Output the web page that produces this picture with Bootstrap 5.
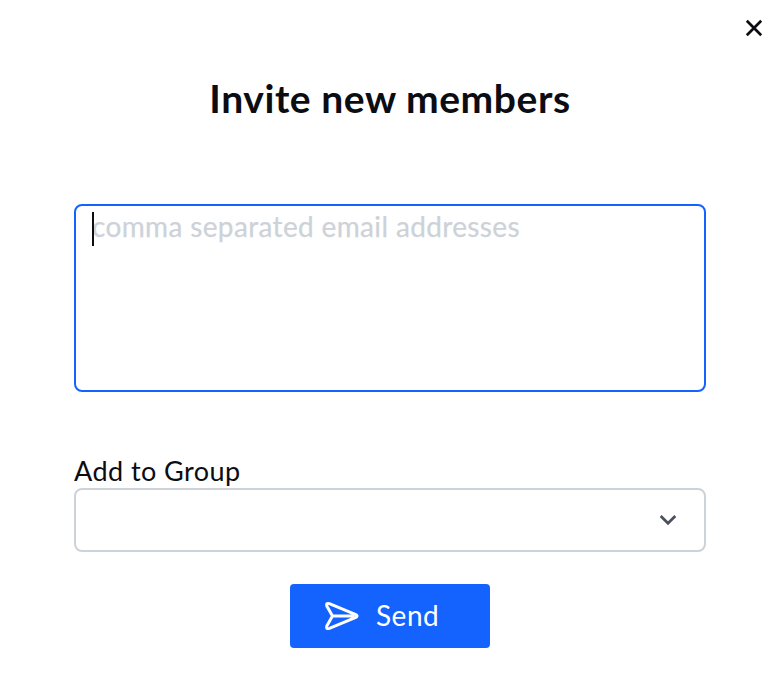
<!DOCTYPE html>
<html lang="en">
<head>
<meta charset="utf-8">
<meta name="viewport" content="width=device-width, initial-scale=1">
<title>Invite new members</title>
<link href="https://cdn.jsdelivr.net/npm/bootstrap@5.3.0/dist/css/bootstrap.min.css" rel="stylesheet">
<style>
body{font-family:Lato,"Liberation Sans",sans-serif;font-size:27px;line-height:36px;color:#0b0d12;background:#fff}
.invite-dialog{width:782px;height:682px}
.close-btn{width:20px;height:20px;margin:18px 18px 0 0}
.invite-title{font-size:39px;line-height:48px;font-weight:700;margin-top:36px;padding-right:2px;letter-spacing:.56px}
.invite-form{width:632px;margin:82px 0 0 74px}
.invite-form .emails{height:188px;border:2px solid #1463ff;border-radius:8px;padding:2px 16px;font-size:28px;line-height:36px;letter-spacing:.35px;resize:none;box-shadow:none}
.emails::placeholder{color:#cdd2d9;opacity:1;-webkit-text-stroke:.25px #cdd2d9}
.text-caret{left:18px;top:8px;width:2px;height:34px;background:#0b0d12}
.group-label{margin:61px 0 0;line-height:35px;letter-spacing:.45px}
.invite-form .group-select{height:64px;border:2px solid #cdd2d9;border-radius:8px;padding:7px 27px}
.send-btn{width:200px;height:64px;margin-top:32px;border-radius:4px;background:#1463ff;color:#fff;font-size:28px;line-height:36px;padding:0 0 0 34px;gap:16px}
.send-btn span{letter-spacing:.5px;padding-bottom:2px}
.send-btn:hover{background:#1058e6;color:#fff}
</style>
</head>
<body>
<main class="invite-dialog d-flex flex-column">
  <button type="button" class="close-btn btn p-0 border-0 d-flex align-self-end" aria-label="Close">
    <svg width="20" height="20" viewBox="0 0 20 20" fill="none" stroke="#0b0d12" stroke-width="2.7"><path d="M2.8 2.8 17.2 17.2M17.2 2.8 2.8 17.2"/></svg>
  </button>
  <h1 class="invite-title text-center mb-0">Invite new members</h1>
  <form class="invite-form">
    <div class="position-relative d-flex">
      <textarea class="emails form-control" placeholder="comma separated email addresses" aria-label="Email addresses"></textarea>
      <span class="text-caret position-absolute"></span>
    </div>
    <label class="group-label d-block" for="group">Add to Group</label>
    <button type="button" id="group" class="group-select btn bg-white w-100 d-flex align-items-center justify-content-end">
      <svg width="18" height="12" viewBox="0 0 18 12" fill="none" stroke="#4b505c" stroke-width="2.7"><path d="M1.7 2 9 9.3 16.3 2"/></svg>
    </button>
    <button type="button" class="send-btn btn border-0 d-flex align-items-center mx-auto">
      <svg width="36" height="32" viewBox="0 0 36 32" fill="none" stroke="#fff" stroke-width="3" stroke-linejoin="round" stroke-linecap="round"><path d="M5.4 3.6 31.8 14.7Q34.4 16 31.8 17.3L5.4 28.4Q1.8 29.4 2.8 26L8.5 16 2.8 6Q1.8 2.6 5.4 3.6ZM8.5 16H29"/></svg>
      <span>Send</span>
    </button>
  </form>
</main>
<script src="https://cdn.jsdelivr.net/npm/bootstrap@5.3.0/dist/js/bootstrap.bundle.min.js"></script>
</body>
</html>
